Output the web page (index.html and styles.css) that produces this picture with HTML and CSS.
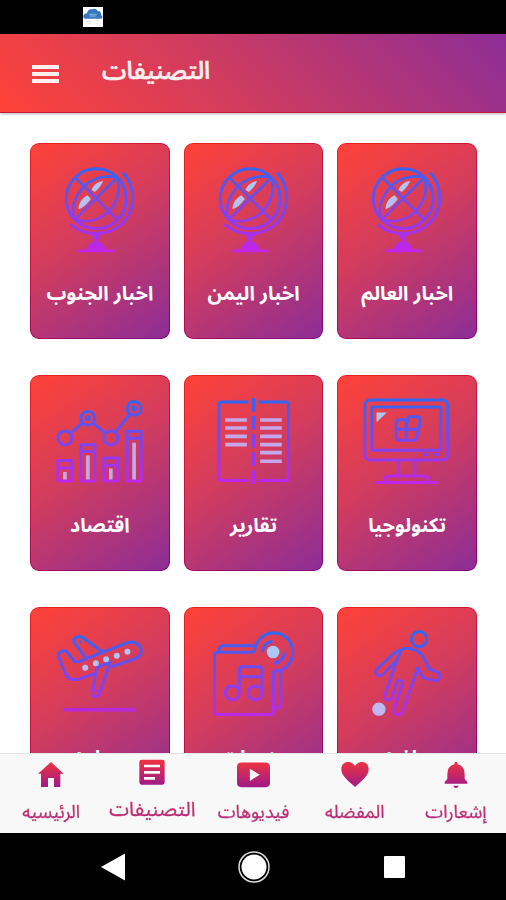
FILE: index.html
```html
<!DOCTYPE html>
<html lang="ar">
<head>
    <meta charset="UTF-8">
    <meta name="viewport" content="width=device-width, initial-scale=1.0">
    <title>التصنيفات</title>
    <link rel="stylesheet" href="styles.css">
</head>
<body>
    <!-- shared gradients and the globe icon -->
    <svg class="defs" width="0" height="0">
        <defs>
            <linearGradient id="line" gradientUnits="userSpaceOnUse" x1="0" y1="100" x2="0" y2="360">
                <stop offset="0" stop-color="#2f68f5"/>
                <stop offset="1" stop-color="#c424ea"/>
            </linearGradient>
            <linearGradient id="light" gradientUnits="userSpaceOnUse" x1="0" y1="100" x2="0" y2="400">
                <stop offset="0" stop-color="#a4ccf8"/>
                <stop offset="1" stop-color="#c8b0f5"/>
            </linearGradient>
            <linearGradient id="nav" gradientUnits="userSpaceOnUse" x1="0" y1="0" x2="0" y2="90">
                <stop offset="0.1" stop-color="#ee3340"/>
                <stop offset="1" stop-color="#99188e"/>
            </linearGradient>
            <symbol id="globe" viewBox="30 36 420 330">
                <g class="stroke">
                    <circle cx="229" cy="203" r="90"/>
                    <path class="meridians" d="M166 139L293 267M293 139C250 128 205 147 183 177C160 208 154 241 164 266M293 139C304 178 291 216 266 242C239 268 200 277 164 266M164 266L293 139"/>
                    <path d="M310 125C349 166 348 234 312 273C268 319 197 318 152 280"/>
                    <path d="M229 310V336M175 360H284"/>
                </g>
                <path class="base" d="M208 308H250Q236 316 234 332Q256 338 258 362H200Q202 338 224 332Q222 316 208 308Z"/>
                <path class="shine" d="M215 176C222 160 236 151 250 150C245 162 237 173 225 183ZM203 193L213 204C202 220 190 230 176 235C176 218 185 202 203 193Z"/>
            </symbol>
        </defs>
    </svg>

    <div class="status-bar">
        <svg class="app-icon" viewBox="0 0 60 60">
            <rect width="60" height="60" fill="#fff"/>
            <path d="M6 35Q0 34 1 26Q4 19 12 19Q15 5 27 7Q38 2 44 12Q55 12 54 23Q62 29 56 35Z" fill="#3478bd"/>
            <path d="M18 22H42M20 27H38" stroke="#8cb8df" stroke-width="3"/>
            <path d="M10 43H27M34 42H50M14 50H24M34 50H48" stroke="#e6e6e6" stroke-width="3"/>
        </svg>
    </div>

    <header class="header">
        <div class="menu-btn"><span></span><span></span><span></span></div>
        <h1 class="title">التصنيفات</h1>
    </header>

    <main class="categories" dir="rtl">
        <div class="card">
            <svg class="icon"><use href="#globe"/></svg>
            <div class="label">اخبار العالم</div>
        </div>
        <div class="card">
            <svg class="icon"><use href="#globe"/></svg>
            <div class="label">اخبار اليمن</div>
        </div>
        <div class="card">
            <svg class="icon"><use href="#globe"/></svg>
            <div class="label">اخبار الجنوب</div>
        </div>

        <div class="card">
            <svg class="icon" viewBox="24 30 420 330">
                <g class="stroke">
                    <rect x="108" y="105" width="249" height="180" rx="14"/>
                    <rect x="129" y="126" width="207" height="130" rx="3"/>
                    <path d="M209 286V332M258 286V332M169 352V343Q169 333 179 333H288Q298 333 298 343V352M140 353H328M284 269H299M314 269H330"/>
                    <path d="M232 164H211Q202 164 202 174V216Q202 226 212 226H254Q263 226 264 217L269 191M203 193H267M232 162V226M237 163Q236 155 245 155H265Q274 155 274 164L272 184Q271 193 262 193H232Z"/>
                </g>
                <path class="shine" d="M143 142H174L143 172Z"/>
            </svg>
            <div class="label">تكنولوجيا</div>
        </div>
        <div class="card">
            <svg class="icon" viewBox="27 30 420 330">
                <path class="stroke" d="M221 111H139Q132 111 132 118V340Q132 347 139 347H221M251 111H334Q341 111 341 118V340Q341 347 334 347H251"/>
                <g class="base">
                    <rect x="231" y="99" width="11" height="41"/>
                    <rect x="231" y="153" width="11" height="41"/>
                    <rect x="231" y="208" width="11" height="40"/>
                    <rect x="231" y="262" width="11" height="41"/>
                    <rect x="231" y="317" width="11" height="40"/>
                </g>
                <path class="shine-line" d="M151 165H216M151 189H216M151 214H216M151 239H216M256 165H321M256 189H321M256 214H321M256 239H321M256 263H321M256 289H321"/>
            </svg>
            <div class="label">تقارير</div>
        </div>
        <div class="card">
            <svg class="icon" viewBox="30 30 420 330">
                <g class="stroke">
                    <circle cx="135" cy="219" r="21"/>
                    <circle cx="204" cy="160" r="21"/>
                    <circle cx="273" cy="219" r="21"/>
                    <circle cx="343" cy="130" r="21"/>
                    <path d="M151 205L188 174M220 174L257 205M286 202L330 147"/>
                    <path d="M114 287H156V348H114ZM114 309H156M183 239H225V348H183ZM183 260H225M252 279H294V348H252ZM252 301H294M322 199H364V348H322ZM322 220H364"/>
                </g>
                <circle class="base" cx="204" cy="160" r="9"/>
                <circle class="base" cx="343" cy="130" r="9"/>
                <path class="shine-line" d="M135 321V343.500M204 272V343.500M273 311V343.500M343 233V343.500"/>
            </svg>
            <div class="label">اقتصاد</div>
        </div>

        <div class="card">
            <svg class="icon" viewBox="24 21 420 330">
                <g class="stroke">
                    <circle cx="271" cy="117" r="23"/>
                    <path d="M217 149C235 139 261 149 274 159C290 174 292 194 302 207L326 216C338 223 333 243 318 242L286 234C277 228 273 216 267 203L222 333C215 353 191 345 196 327L221 250Q222 244 215 242Q207 239 204 246L190 291C184 308 162 300 168 285L204 180L160 225C148 235 134 219 145 206L193 162Q205 151 217 149M217 150L201 190"/>
                </g>
                <circle class="shine" cx="150" cy="328" r="20"/>
            </svg>
            <div class="label">رياضه</div>
        </div>
        <div class="card">
            <svg class="icon" viewBox="27 21 420 330">
                <g class="stroke">
                    <path d="M238 157H129Q119 157 119 166V335Q119 344 128 344H288Q296 344 296 335V212M134 154V148Q134 137 144 137H241M296 212H318V314Q318 324 309 324H299"/>
                    <path d="M239 157C241 124 265 99 295 98C329 98 354 125 354 157C354 187 333 211 302 214"/>
                    <path d="M263 157Q264 130 293 123M297 190Q324 186 330 157"/>
                    <circle cx="172" cy="279" r="21"/>
                    <circle cx="241" cy="279" r="21"/>
                    <path d="M193 279V210Q193 200 203 200H252Q262 200 262 210V279M193 230H262"/>
                </g>
                <circle class="shine" cx="295" cy="156" r="19"/>
            </svg>
            <div class="label">منوعات</div>
        </div>
        <div class="card">
            <svg class="icon" viewBox="30 21 420 330">
                <g class="stroke">
                    <path d="M224 221L174 238C154 242 143 234 137 222L115 168C113 154 137 147 143 158L164 184Q170 187 181 183L323 128C347 121 365 137 364 155C362 171 351 175 340 178L273 201"/>
                    <path d="M199 176L163 127C157 114 172 107 187 111L248 156M184 125H177"/>
                    <path d="M271 187L239 282C232 294 216 292 218 281L229 209Q231 201 240 198ZM236 270L232 275"/>
                </g>
                <rect class="ground" x="131" y="324" width="218" height="11"/>
                <g class="shine">
                    <circle cx="196" cy="203" r="9"/>
                    <circle cx="228" cy="190" r="9"/>
                    <circle cx="259" cy="178" r="9"/>
                    <circle cx="291" cy="167" r="9"/>
                    <circle cx="323" cy="155" r="9"/>
                </g>
            </svg>
            <div class="label">سياحه</div>
        </div>
    </main>

    <nav class="bottom-nav" dir="rtl">
        <div class="nav-item">
            <svg viewBox="0 0 90 90"><path d="M40 16Q40 8 45 8T50 16Q71 22 71 45V60L79 69V74H11V69L19 60V45Q19 22 40 16ZM37 80H53Q51 87 45 87T37 80Z"/></svg>
            <span>إشعارات</span>
        </div>
        <div class="nav-item">
            <svg viewBox="0 0 90 90"><path d="M45 84C20 62 4 49 4 31C4 5 34 3 45 21C56 3 86 5 86 31C86 49 70 62 45 84Z"/></svg>
            <span>المفضله</span>
        </div>
        <div class="nav-item wide">
            <svg viewBox="-5 0 100 90"><path fill-rule="evenodd" d="M8 10H82Q95 10 95 24V71Q95 85 82 85H8Q-5 85-5 71V24Q-5 10 8 10ZM34 29V66L64 47Z"/></svg>
            <span>فيديوهات</span>
        </div>
        <div class="nav-item active">
            <svg viewBox="0 0 90 90"><path fill-rule="evenodd" d="M14 8H76Q83 8 83 15V76Q83 83 76 83H14Q7 83 7 76V15Q7 8 14 8ZM21 23V31H69V23ZM21 42V50H69V42ZM21 60V68H54V60Z"/></svg>
            <span>التصنيفات</span>
        </div>
        <div class="nav-item">
            <svg viewBox="0 0 90 90"><path d="M45 9L83 44H73V84H54V57H36V84H15V44H6Z"/></svg>
            <span>الرئيسيه</span>
        </div>
    </nav>

    <div class="system-nav">
        <svg viewBox="0 0 28 32"><path d="M1 16L25 2.500V29.500Z"/></svg>
        <svg viewBox="0 0 32 32"><circle cx="16" cy="16" r="12.500"/><circle class="ring" cx="16" cy="16" r="15"/></svg>
        <svg viewBox="0 0 28 32"><rect x="4" y="5" width="21" height="22" rx="1"/></svg>
    </div>
</body>
</html>
```
FILE: styles.css
```css
* {
    box-sizing: border-box;
}

body {
    margin: 0;
    height: 900px;
    display: flex;
    flex-direction: column;
    overflow: hidden;
    background: #fff;
    font-family: "Noto Sans Arabic", "DejaVu Sans", sans-serif;
}

.defs {
    position: absolute;
}

.status-bar {
    height: 34px;
    flex: none;
    padding: 7px 0 0 83px;
    background: #000;
}

.app-icon {
    display: block;
    width: 20px;
    height: 20px;
}

.header {
    height: 79px;
    flex: none;
    display: flex;
    align-items: center;
    padding: 0 32px;
    background: linear-gradient(45deg, #ff4238, #d23c5e 42%, #8c2d96);
    border-bottom: 1px solid #c5163e;
    box-shadow: 0 1px 3px rgba(0, 0, 0, 0.3);
    z-index: 1;
}

.menu-btn {
    width: 27px;
    display: grid;
    gap: 3px;
    margin-top: 2px;
}

.menu-btn span {
    height: 4px;
    background: #fff0f0;
}

.title {
    margin: 0 0 4px 43px;
    color: #fff0f0;
    font-size: 24.500px;
    font-weight: 500;
    line-height: 40px;
    -webkit-text-stroke: 0.6px #fff0f0;
}

.categories {
    flex: 1;
    min-height: 0;
    overflow: hidden;
    display: grid;
    grid-template-columns: repeat(3, minmax(0, 1fr));
    grid-auto-rows: 196px;
    gap: 36px 14px;
    align-content: start;
    padding: 29.500px 29px 0 30px;
}

.card {
    border: 1px solid transparent;
    border-radius: 9px;
    background: linear-gradient(145deg, #ff4238, #d23c5e 45%, #8c2d96) padding-box,
        linear-gradient(145deg, #ee2020, #c01045 45%, #850080) border-box;
}

.icon {
    display: block;
    width: calc(100% + 2px);
    height: 110px;
    margin: -1px;
}

.stroke {
    fill: none;
    stroke: url(#line);
    stroke-width: 9;
    stroke-linejoin: round;
}

.meridians {
    stroke-width: 8;
}

.base {
    fill: url(#line);
}

.ground {
    fill: #b82ad8;
}

.shine {
    fill: url(#light);
}

.shine-line {
    fill: none;
    stroke: #c5a8eb;
    stroke-width: 11;
}

.label {
    margin-top: 26px;
    color: #fff;
    font-size: 19.700px;
    font-weight: bold;
    line-height: 33px;
    text-align: center;
    white-space: nowrap;
}

.bottom-nav {
    height: 80px;
    flex: none;
    display: grid;
    grid-template-columns: repeat(5, 1fr);
    background: #f8f8f8;
    border-top: 1px solid #e5e5e5;
    z-index: 1;
}

.nav-item {
    display: flex;
    flex-direction: column;
    align-items: center;
    padding: 5px 0 0 1px;
    font-size: 18px;
    line-height: 30px;
    white-space: nowrap;
}

.nav-item svg {
    width: 30px;
    height: 30px;
    fill: url(#nav);
}

.nav-item.wide svg {
    width: 33px;
}

.nav-item span {
    margin-top: 8px;
    color: transparent;
    background: linear-gradient(#df3155, #a52586);
    background-clip: text;
    -webkit-background-clip: text;
    -webkit-text-stroke: 0.3px transparent;
}

.nav-item.active {
    padding-top: 3px;
    font-size: 20px;
}

.system-nav {
    height: 67px;
    flex: none;
    display: flex;
    justify-content: space-between;
    align-items: center;
    padding: 0 98px 0 100px;
    background: #000;
}

.system-nav svg {
    width: 28px;
    height: 32px;
    fill: #fff;
}

.system-nav svg:nth-child(2) {
    width: 32px;
}

.system-nav .ring {
    fill: none;
    stroke: #ddd;
    stroke-width: 1.500;
}
```
